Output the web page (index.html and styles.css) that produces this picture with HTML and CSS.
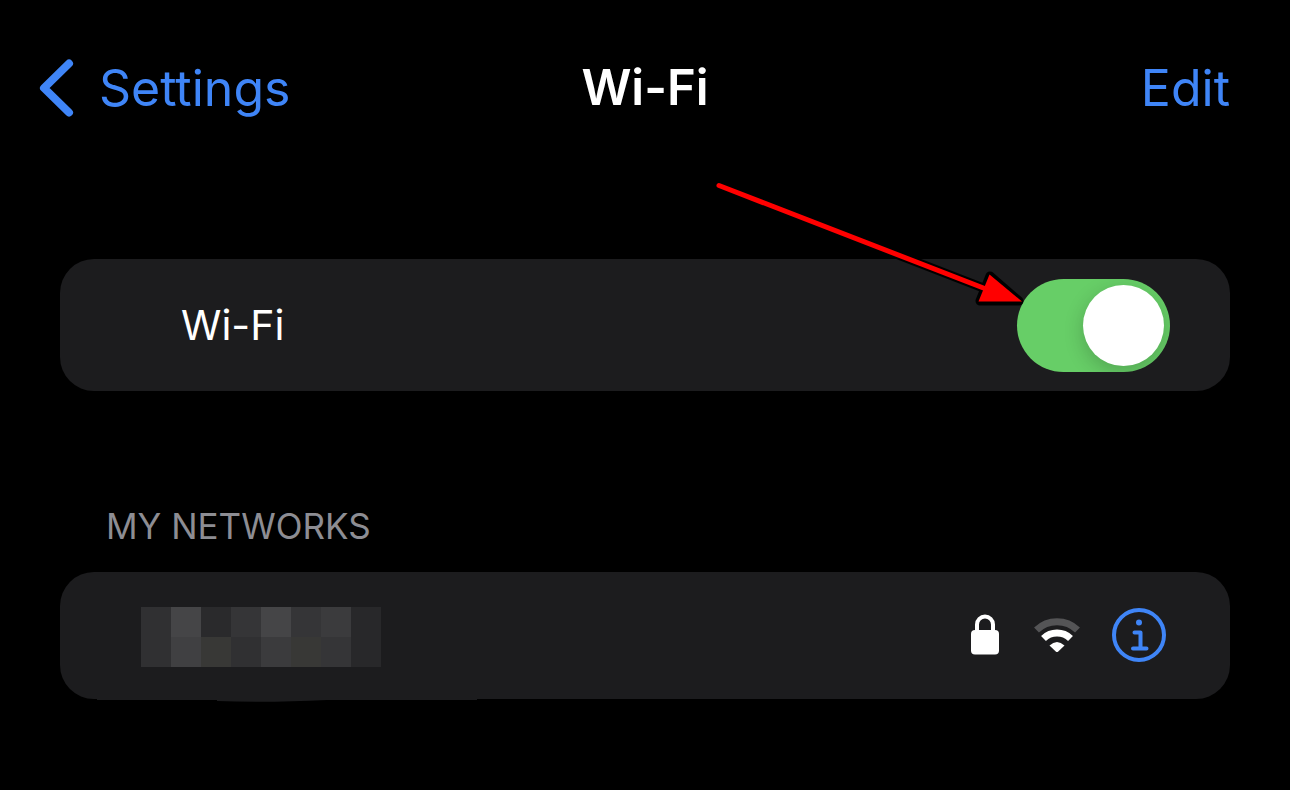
FILE: index.html
```html
<!DOCTYPE html>
<html lang="en">
<head>
    <meta charset="UTF-8" />
    <meta name="viewport" content="width=device-width, initial-scale=1.0" />
    <title>Wi-Fi</title>
    <link rel="stylesheet" href="styles.css">
</head>
<body>
    <header class="navbar">
        <a class="back" href="#settings">
            <svg class="chevron" viewBox="0 0 36 60" aria-hidden="true">
                <path d="M30 5.500L5 30L30 54.500" />
            </svg>
            Settings
        </a>
        <h1>Wi-Fi</h1>
        <button class="edit" type="button">Edit</button>
    </header>

    <main>
        <section class="card wifi-card">
            <label for="wifi">Wi-Fi</label>
            <div class="switch">
                <input type="checkbox" id="wifi" role="switch" checked />
                <svg class="arrow" viewBox="0 0 320 140" aria-hidden="true">
                    <path class="outline" d="M9 10.500L276 114M280 101L309 126L270 126Z" />
                    <path class="line" d="M9 10.500L276 114" />
                    <path class="head" d="M279.500 99.500L312 126.500L268.500 126.500Z" />
                </svg>
            </div>
        </section>

        <h2>MY NETWORKS</h2>
        <section class="card network-card">
            <div class="hidden-name" role="img" aria-label="Hidden network name">
                <span class="tone-3"></span>
                <span class="tone-7"></span>
                <span class="tone-2"></span>
                <span class="tone-4"></span>
                <span class="tone-7"></span>
                <span class="tone-4"></span>
                <span class="tone-5"></span>
                <span class="tone-1"></span>
                <span class="tone-3"></span>
                <span class="tone-6"></span>
                <span class="tone-warm"></span>
                <span class="tone-3"></span>
                <span class="tone-5"></span>
                <span class="tone-warm"></span>
                <span class="tone-4"></span>
                <span class="tone-1"></span>
            </div>
            <div class="status">
                <svg class="lock" viewBox="0 0 28 42" aria-hidden="true">
                    <path d="M6 20V10.500a8 8 0 0 1 16 0V20" fill="none" stroke="#fff" stroke-width="4" />
                    <rect y="16" width="28" height="24.500" rx="4" fill="#fff" />
                </svg>
                <svg class="signal" viewBox="0 0 48 36" aria-hidden="true">
                    <path d="M3.500 13A29.500 29.500 0 0 1 44.500 13" stroke="#545456" />
                    <path d="M10.500 21.500A19.500 19.500 0 0 1 37.500 21.500" stroke="#fff" />
                    <path class="dot" d="M16.500 28.500Q24 21.500 31.500 28.500L25 34.700Q24 35.500 23 34.700Z" />
                </svg>
                <button class="info" type="button" aria-label="Network details">
                    <svg viewBox="0 0 54 54" aria-hidden="true">
                        <circle cx="27" cy="27" r="25" />
                        <path d="M22.500 24.500H28.500V40.500M21 40.500H34.500" />
                        <circle class="dot" cx="27" cy="14.500" r="3" />
                    </svg>
                </button>
            </div>
            <svg class="smudge" viewBox="0 0 380 4" aria-hidden="true">
                <path d="M0 0H380V1H230Q170 4 120 2V1H0Z" />
            </svg>
        </section>
    </main>
</body>
</html>
```
FILE: styles.css
```css
* {
    box-sizing: border-box;
}
body {
    margin: 0;
    background-color: black;
    color: white;
    font-family: Inter, Roboto, sans-serif;
}
button {
    padding: 0;
    border: none;
    background: none;
    font-family: inherit;
    cursor: pointer;
}
svg {
    display: block;
    fill: none;
}
.navbar {
    display: grid;
    grid-template-columns: 1fr auto 1fr;
    align-items: center;
    padding: 58px 60px 0;
    font-size: 50px;
    line-height: 60px;
}
.back {
    display: flex;
    align-items: center;
    gap: 24px;
    justify-self: start;
    margin-left: -21px;
    color: #3f85f7;
    text-decoration: none;
}
.chevron {
    width: 36px;
    height: 60px;
    stroke: #3f85f7;
    stroke-width: 8;
    stroke-linecap: round;
    stroke-linejoin: round;
}
h1 {
    margin: 0;
    font-size: 49px;
    font-weight: 600;
}
.edit {
    justify-self: end;
    color: #3f85f7;
    font-size: 50px;
    line-height: 60px;
}
main {
    padding: 141px 60px 40px;
}
.card {
    position: relative;
    display: flex;
    align-items: center;
    justify-content: space-between;
    border-radius: 34px;
    background-color: #1c1c1e;
}
.wifi-card {
    height: 132px;
    padding: 0 60px 0 121px;
    font-size: 41px;
}
.switch {
    position: relative;
}
.switch input {
    display: flex;
    align-items: center;
    justify-content: flex-end;
    width: 153px;
    height: 93px;
    margin: 0;
    padding: 6px;
    appearance: none;
    border-radius: 47px;
    background-color: #67ce67;
    overflow: hidden;
    cursor: pointer;
}
.switch input::before {
    content: "";
    width: 81px;
    height: 81px;
    border-radius: 50%;
    background-color: white;
    box-shadow: 0 6px 20px rgba(0, 0, 0, 0.2);
}
.switch input:not(:checked) {
    justify-content: flex-start;
    background-color: #39393d;
}
/* pointer drawn over the page, ending at the switch */
.arrow {
    position: absolute;
    right: 140px;
    bottom: 57px;
    width: 320px;
    height: 140px;
    pointer-events: none;
}
.arrow .outline {
    stroke: black;
    stroke-width: 9;
    stroke-linejoin: round;
}
.arrow .line {
    stroke: red;
    stroke-width: 5;
    stroke-linecap: round;
}
.arrow .head {
    fill: red;
}
h2 {
    margin: 114px 0 25px 46px;
    color: #8d8d93;
    font-size: 35px;
    font-weight: 400;
    line-height: 42px;
}
.network-card {
    height: 127px;
    padding: 2px 64px 0 81px;
}
.hidden-name {
    display: grid;
    grid-template-columns: repeat(8, 30px);
    grid-auto-rows: 30px;
}
.tone-1 { background-color: #28282a; }
.tone-2 { background-color: #2a2a2c; }
.tone-3 { background-color: #303032; }
.tone-4 { background-color: #353537; }
.tone-5 { background-color: #3b3b3d; }
.tone-6 { background-color: #404042; }
.tone-7 { background-color: #454547; }
.tone-warm { background-color: #383836; }
.status {
    display: flex;
    align-items: center;
    margin-bottom: 4px;
}
.lock {
    width: 28px;
    height: 42px;
    margin-right: 34px;
}
.signal {
    width: 48px;
    height: 36px;
    margin-right: 31px;
    stroke-width: 7;
}
.signal .dot {
    fill: white;
}
.info svg {
    width: 54px;
    height: 54px;
    stroke: #3f85f7;
    stroke-width: 4;
    stroke-linecap: round;
    stroke-linejoin: round;
}
.info .dot {
    fill: #3f85f7;
    stroke: none;
}
.smudge {
    position: absolute;
    top: 100%;
    left: 37px;
    width: 380px;
    height: 4px;
    fill: #1c1c1e;
}
```
